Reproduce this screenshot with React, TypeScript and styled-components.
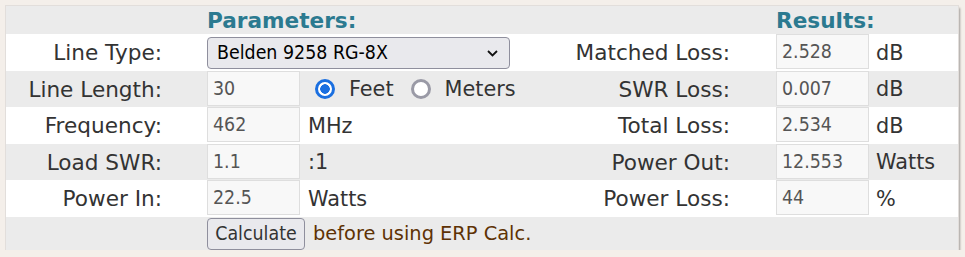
import React from "react";
import styled, { createGlobalStyle } from "styled-components";

const GlobalStyle = createGlobalStyle`
  html, body {
    margin: 0;
    padding: 0;
    background: #f4efea;
  }
  body {
    font-family: "DejaVu Sans", Verdana, sans-serif;
  }
`;

const labelColor = "#333333";
const headColor = "#2b7a90";
const rowGray = "#ebebeb";
const fieldFont = `"DejaVu Sans Condensed", "DejaVu Sans", sans-serif`;

const Panel = styled.div`
  margin: 6px 0 0 6px;
  width: 952px;
  background: #fff;
  box-shadow: 2px 2px 2px rgba(0, 0, 0, 0.35);
  outline: 1px solid #e2dedb;
`;

const Row = styled.div<{ $gray?: boolean; $h: number }>`
  display: grid;
  grid-template-columns: 201px 93px 260px 216px 92px 90px;
  align-items: center;
  height: ${(p) => p.$h}px;
  background: ${(p) => (p.$gray ? rowGray : "#fff")};
`;

const Heading = styled.div<{ $col: number }>`
  grid-column: ${(p) => p.$col} / span 2;
  font-size: 21.6px;
  font-weight: bold;
  color: ${headColor};
  line-height: 1;
  padding-top: 2px;
`;

const Label = styled.div<{ $pad: number }>`
  text-align: right;
  padding-right: ${(p) => p.$pad}px;
  font-size: 21.6px;
  color: ${labelColor};
  white-space: nowrap;
`;

const Unit = styled.div`
  padding-left: 8px;
  font-size: 20.8px;
  color: ${labelColor};
  white-space: nowrap;
`;

const Cell = styled.div`
  align-self: start;
  height: 100%;
`;

const Field = styled.input`
  box-sizing: border-box;
  width: 93px;
  height: 35px;
  margin: 0;
  padding: 0 0 0 5px;
  border: 1px solid #dedede;
  background: #f8f8f8;
  font-family: ${fieldFont};
  font-size: 19.4px;
  color: #555;
  outline: none;
`;

const SelectWrap = styled.div`
  grid-column: 2 / span 2;
  position: relative;
  width: 303px;
  height: 32px;
`;

const Select = styled.select`
  appearance: none;
  box-sizing: border-box;
  width: 100%;
  height: 100%;
  margin: 0;
  padding: 0 30px 0 9px;
  border: 1px solid #8f8f9d;
  border-radius: 4px;
  background: #e9e9ed;
  font-family: ${fieldFont};
  font-size: 19.4px;
  color: #000;
`;

const Chevron = styled.svg`
  position: absolute;
  right: 12px;
  top: 13px;
  pointer-events: none;
`;

const RadioGroup = styled.div`
  display: flex;
  align-items: center;
  padding-left: 15px;
  font-size: 20.8px;
  color: ${labelColor};
  white-space: nowrap;
`;

const RadioDot = styled.span<{ $on?: boolean }>`
  box-sizing: border-box;
  width: 20px;
  height: 20px;
  border-radius: 50%;
  border: 3px solid ${(p) => (p.$on ? "#1a6fe0" : "#9a9aa6")};
  background: ${(p) =>
    p.$on ? "radial-gradient(circle, #1a6fe0 0 4.5px, #fff 5px)" : "#fff"};
  margin-right: 14px;
`;

const RadioText = styled.span`
  margin-right: 17px;
`;

const Button = styled.button`
  box-sizing: border-box;
  width: 98px;
  height: 32px;
  margin: 0;
  padding: 0;
  border: 1px solid #8f8f9d;
  border-radius: 4px;
  background: #e9e9ed;
  font-family: ${fieldFont};
  font-size: 19.4px;
  color: #333;
`;

const Note = styled.div`
  grid-column: 3 / span 2;
  padding-left: 13px;
  font-size: 19.4px;
  color: #5e3204;
  white-space: nowrap;
`;

type Res = { label: string; value: string; unit: string };

const results: Res[] = [
  { label: "Matched Loss:", value: "2.528", unit: "dB" },
  { label: "SWR Loss:", value: "0.007", unit: "dB" },
  { label: "Total Loss:", value: "2.534", unit: "dB" },
  { label: "Power Out:", value: "12.553", unit: "Watts" },
  { label: "Power Loss:", value: "44", unit: "%" },
];

const ResultCells = ({ r }: { r: Res }) => (
  <>
    <Label $pad={46}>{r.label}</Label>
    <Cell>
      <Field readOnly defaultValue={r.value} />
    </Cell>
    <Unit>{r.unit}</Unit>
  </>
);

const App = () => {
  return (
    <>
      <GlobalStyle />
      <Panel>
        <Row $gray $h={28}>
          <div />
          <Heading $col={2}>Parameters:</Heading>
          <div />
          <Heading $col={5}>Results:</Heading>
        </Row>

        <Row $h={37}>
          <Label $pad={45}>Line Type:</Label>
          <SelectWrap>
            <Select defaultValue="9258">
              <option value="9258">Belden 9258 RG-8X</option>
            </Select>
            <Chevron width="11" height="7" viewBox="0 0 11 7">
              <path d="M1 1l4.5 4.5L10 1" fill="none" stroke="#111" strokeWidth="1.8" />
            </Chevron>
          </SelectWrap>
          <ResultCells r={results[0]} />
        </Row>

        <Row $gray $h={36}>
          <Label $pad={45}>Line Length:</Label>
          <Cell>
            <Field defaultValue="30" />
          </Cell>
          <RadioGroup>
            <RadioDot $on />
            <RadioText>Feet</RadioText>
            <RadioDot />
            <RadioText>Meters</RadioText>
          </RadioGroup>
          <ResultCells r={results[1]} />
        </Row>

        <Row $h={37}>
          <Label $pad={45}>Frequency:</Label>
          <Cell>
            <Field defaultValue="462" />
          </Cell>
          <Unit>MHz</Unit>
          <ResultCells r={results[2]} />
        </Row>

        <Row $gray $h={36}>
          <Label $pad={45}>Load SWR:</Label>
          <Cell>
            <Field defaultValue="1.1" />
          </Cell>
          <Unit>:1</Unit>
          <ResultCells r={results[3]} />
        </Row>

        <Row $h={37}>
          <Label $pad={45}>Power In:</Label>
          <Cell>
            <Field defaultValue="22.5" />
          </Cell>
          <Unit>Watts</Unit>
          <ResultCells r={results[4]} />
        </Row>

        <Row $gray $h={33}>
          <div />
          <Button>Calculate</Button>
          <Note>before using ERP Calc.</Note>
        </Row>
      </Panel>
    </>
  );
};

export default App;
